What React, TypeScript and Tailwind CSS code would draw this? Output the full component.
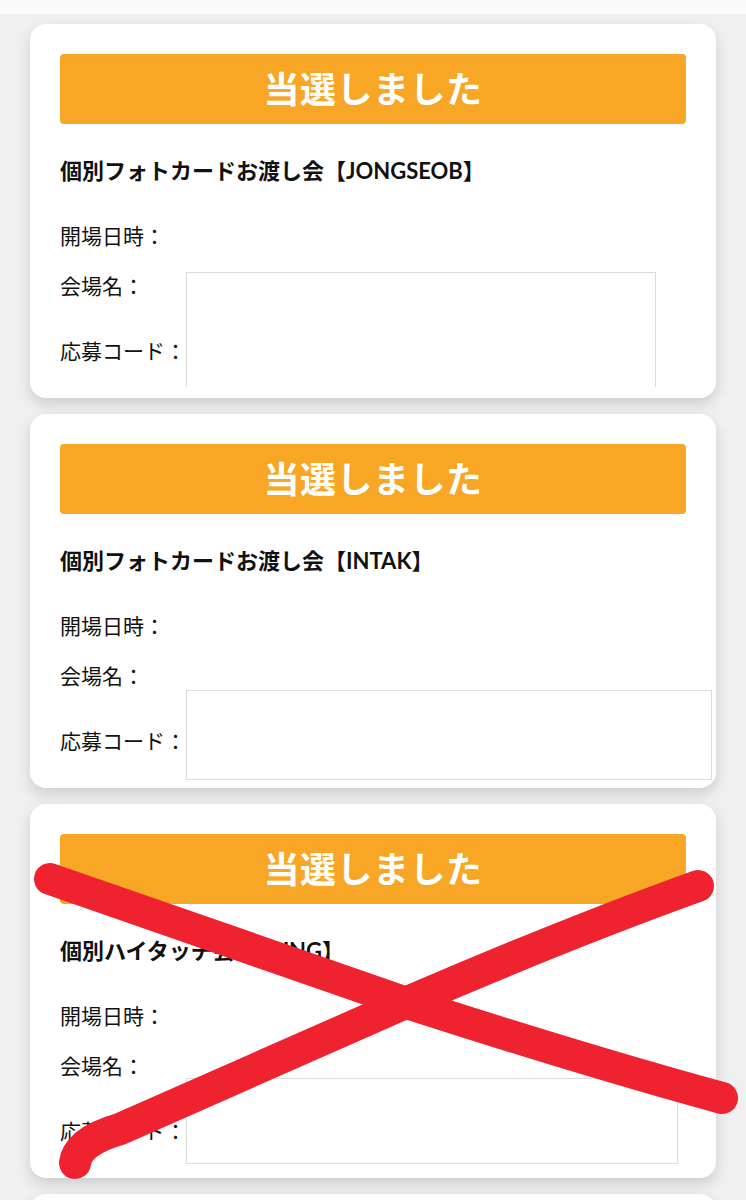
import React from 'react';

interface ResultCardProps {
  title: string;
  boxWidth: string;
  boxOffset: string;
  boxHeight: string;
  crossed?: boolean;
}

const ResultCard: React.FC<ResultCardProps> = ({ title, boxWidth, boxOffset, boxHeight, crossed }) => {
  return (
    <div className="relative h-[374px] bg-white rounded-[16px] shadow-[0_6px_14px_rgba(0,0,0,0.15)] px-[30px] pt-[30px] text-[#111]">
      {/* 当選バナー */}
      <div className="h-[70px] rounded-[4px] bg-[#F8A625] flex items-center justify-center">
        <span className="text-white text-[36px] font-bold leading-none tracking-[0.5px]">当選しました</span>
      </div>

      <h3 className="mt-[32px] text-[22px] font-bold leading-[30px]">{title}</h3>

      <div className="mt-[35px] text-[21px] leading-[30px]">開場日時：</div>
      <div className="mt-[20px] text-[21px] leading-[30px]">会場名：</div>

      <div className="flex items-start">
        <div className="mt-[35px] text-[21px] leading-[30px] shrink-0">応募コード：</div>
        <div className={`${boxWidth} ${boxOffset} ${boxHeight} border border-[#dcdcdc] bg-white shrink-0`}></div>
      </div>

      {crossed && (
        <svg
          className="absolute left-0 top-0 overflow-visible pointer-events-none"
          width={686}
          height={374}
          fill="none"
        >
          <path
            d="M20 75 Q200 138 380 200 Q560 258 692 294"
            stroke="#EF2230"
            strokeWidth={32}
            strokeLinecap="round"
            strokeLinejoin="round"
          />
          <path
            d="M45 359 Q48 337 90 325 L380 197 Q540 128 668 82"
            stroke="#EF2230"
            strokeWidth={32}
            strokeLinecap="round"
            strokeLinejoin="round"
          />
        </svg>
      )}
    </div>
  );
};

const App: React.FC = () => {
  return (
    <div className="w-full h-[1200px] bg-[#f0f0f0] font-['Lato','Noto_Sans_CJK_JP',sans-serif] overflow-hidden">
      <div className="h-[14px] bg-[#fafafa]"></div>
      <div className="px-[30px] pt-[10px] flex flex-col gap-[16px]">
        <ResultCard
          title="個別フォトカードお渡し会【JONGSEOB】"
          boxWidth="w-[470px]"
          boxOffset="-mt-[29px]"
          boxHeight="h-[115px] border-b-0"
        />
        <ResultCard
          title="個別フォトカードお渡し会【INTAK】"
          boxWidth="w-[526px]"
          boxOffset="-mt-[1px]"
          boxHeight="h-[90px]"
        />
        <ResultCard
          title="個別ハイタッチ会【JIUNG】"
          boxWidth="w-[492px]"
          boxOffset="-mt-[3px]"
          boxHeight="h-[86px]"
          crossed
        />
        {/* 次のカード（上端のみ見える） */}
        <div className="h-[374px] bg-white rounded-[16px] shadow-[0_6px_14px_rgba(0,0,0,0.15)]"></div>
      </div>
    </div>
  );
};

export default App;
